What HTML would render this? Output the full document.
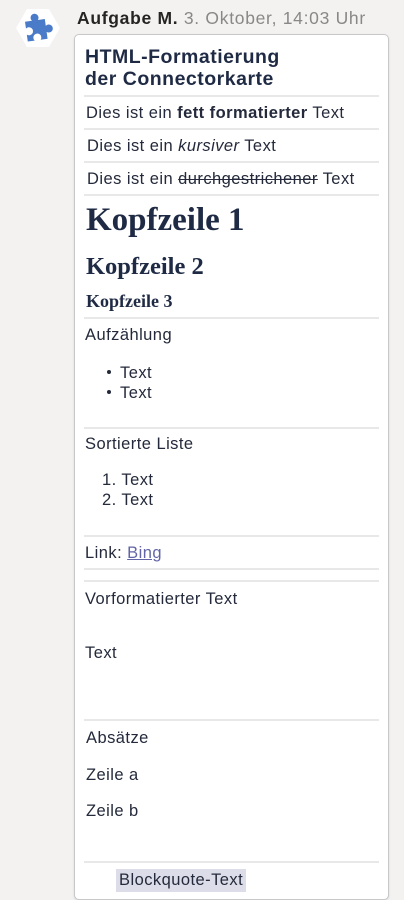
<!DOCTYPE html>
<html><head><meta charset="utf-8"><style>
body{margin:0;width:404px;height:900px;background:#f3f2f1;position:relative;overflow:hidden;font-family:"Liberation Sans",sans-serif;color:#242a3b}
.a{position:absolute;white-space:nowrap;line-height:1}
.card{position:absolute;left:74px;top:34px;width:313px;height:864px;background:#fff;border:1px solid #c8c8c8;border-radius:5px;box-shadow:0 1px 2px rgba(0,0,0,.1)}
.sep{position:absolute;left:84px;width:295px;height:2px;background:#e8e8e8}
.t{font-size:16.5px;letter-spacing:0.45px}
.h{font-family:"Liberation Serif",serif;font-weight:bold}
</style></head><body>
<svg class="a" style="left:16px;top:8px" width="44" height="40" viewBox="0 0 44 40">
<polygon points="11,1 33,1 44,20 33,39 11,39 0,20" fill="#fff"/>
<path d="M10 12 h7 a4 4 0 1 1 6 0 h7 v7 a4 4 0 1 1 0 6 v7 h-7 a4 4 0 1 0 -6 0 h-7 v-7 a4 4 0 1 0 0 -6 z" fill="#4a7bc8" transform="rotate(-8 22 20)"/>
</svg>
<div class="a" style="left:77px;top:10px;font-size:17.5px;letter-spacing:0.7px"><b style="color:#252423">Aufgabe M.</b> <span style="color:#8a8886">3. Oktober, 14:03 Uhr</span></div>
<div class="card"></div>
<div class="a" style="left:85px;top:46px;font-size:19.5px;letter-spacing:0.5px;font-weight:bold;line-height:22px;color:#1f2a44">HTML-Formatierung<br>der Connectorkarte</div>
<div class="sep" style="top:95px"></div>
<div class="a t" style="left:86px;top:105px">Dies ist ein <b>fett formatierter</b> Text</div>
<div class="sep" style="top:128px"></div>
<div class="a t" style="left:87px;top:138px">Dies ist ein <i>kursiver</i> Text</div>
<div class="sep" style="top:161px"></div>
<div class="a t" style="left:87px;top:171px">Dies ist ein <s>durchgestrichener</s> Text</div>
<div class="sep" style="top:194px"></div>
<div class="a h" style="left:86px;top:204px;font-size:33px;color:#1f2a44">Kopfzeile 1</div>
<div class="a h" style="left:86px;top:255px;font-size:24.5px;color:#1f2a44">Kopfzeile 2</div>
<div class="a h" style="left:86px;top:292px;font-size:18px;color:#1f2a44">Kopfzeile 3</div>
<div class="sep" style="top:317px"></div>
<div class="a t" style="left:85px;top:327px">Aufzählung</div>
<div class="a" style="left:107px;top:370px;width:4px;height:4px;border-radius:50%;background:#242a3b"></div>
<div class="a t" style="left:120px;top:365px">Text</div>
<div class="a" style="left:107px;top:390px;width:4px;height:4px;border-radius:50%;background:#242a3b"></div>
<div class="a t" style="left:120px;top:385px">Text</div>
<div class="sep" style="top:427px"></div>
<div class="a t" style="left:85px;top:436px">Sortierte Liste</div>
<div class="a t" style="left:102px;top:472px">1. Text</div>
<div class="a t" style="left:102px;top:492px">2. Text</div>
<div class="sep" style="top:535px"></div>
<div class="a t" style="left:85px;top:545px">Link: <span style="color:#6264a7;text-decoration:underline">Bing</span></div>
<div class="sep" style="top:568px"></div>
<div class="sep" style="top:580px"></div>
<div class="a t" style="left:85px;top:591px">Vorformatierter Text</div>
<div class="a t" style="left:85px;top:645px">Text</div>
<div class="sep" style="top:719px"></div>
<div class="a t" style="left:86px;top:730px">Absätze</div>
<div class="a t" style="left:86px;top:767px">Zeile a</div>
<div class="a t" style="left:86px;top:803px">Zeile b</div>
<div class="sep" style="top:861px"></div>
<div class="a t" style="left:116px;top:869px;height:23px;line-height:23px;padding:0 3px;background:#dcdde9">Blockquote-Text</div>
</body></html>
